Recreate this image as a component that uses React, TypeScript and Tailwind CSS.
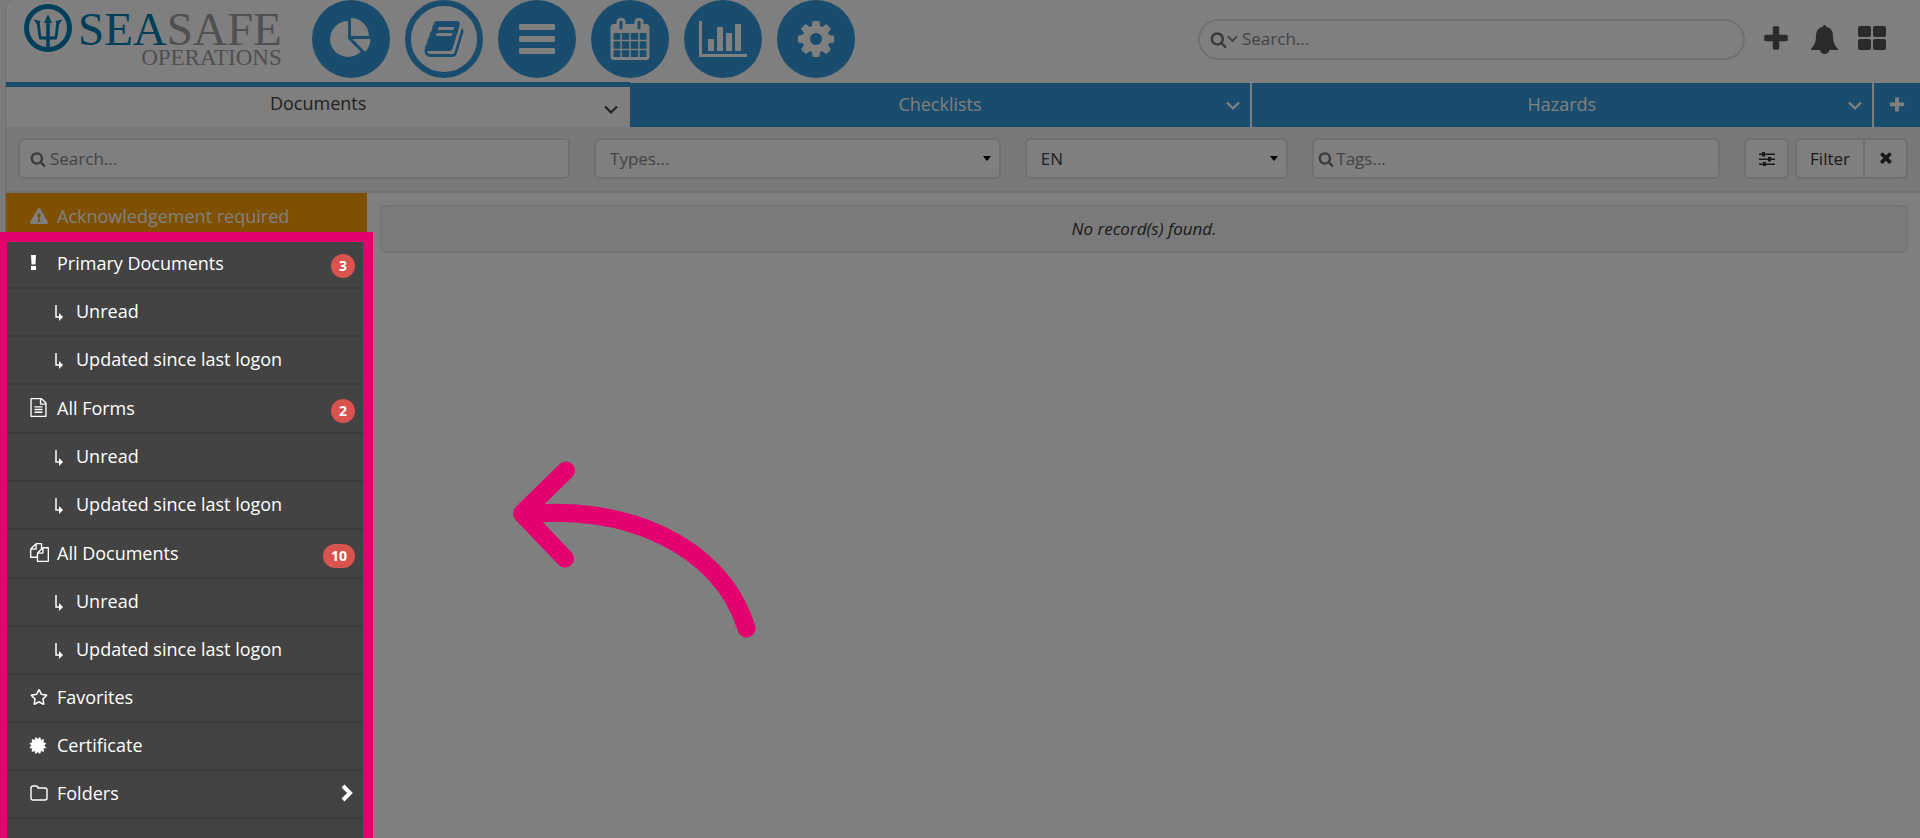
import type { ReactNode } from "react";
import { FaExclamationTriangle, FaRegStar } from "react-icons/fa";

// icons on the 1792 unit grid
const paths = {
  pie: "M768 890l546 546q-106 108-247.500 168t-298.500 60q-209 0-385.500-103t-279.500-279.500-103-385.500 103-385.500 279.500-279.500 385.500-103v762zm187 6h773q0 157-60 298.500t-168 247.500zm709-128h-768v-768q209 0 385.500 103t279.500 279.500 103 385.500z",
  book: "M1703 478q40 57 18 129l-275 906q-19 64-76.500 107.500t-122.500 43.500h-923q-77 0-148.500-53.500t-99.500-131.500q-24-67-2-127 0-4 3-27t4-37q1-8-3-21.500t-3-19.500q2-11 8-21t16.500-23.500 16.500-23.500q23-38 45-91.500t30-91.500q3-10 .5-30t-.5-28q3-11 17-28t17-23q21-36 42-92t25-90q1-9-2.500-32t.5-28q4-13 22-30.500t22-22.500q19-26 42.500-84.500t27.500-96.500q1-8-3-25.500t-2-26.500q2-8 9-18t18-23 17-21q8-12 16.500-30.500t15-35 16-36 19.500-32 26.500-23.500 36-11.500 47.500 5.500l-1 3q38-9 51-9h761q74 0 114 56t18 130l-274 906q-36 119-71.500 153.500t-128.500 34.500h-869q-27 0-38 15-11 16-1 43 24 70 144 70h923q29 0 56-15.500t35-41.500l300-987q7-22 5-57 38 15 59 43zm-1064 2q-4 13 2 22.500t20 9.500h608q13 0 25.500-9.500t16.500-22.500l21-64q4-13-2-22.500t-20-9.500h-608q-13 0-25.500 9.500t-16.500 22.500zm-83 256q-4 13 2 22.500t20 9.500h608q13 0 25.500-9.500t16.500-22.500l21-64q4-13-2-22.500t-20-9.500h-608q-13 0-25.500 9.500t-16.500 22.500z",
  bars: "M192 256h1408a64 64 0 0 1 64 64v128a64 64 0 0 1-64 64h-1408a64 64 0 0 1-64-64v-128a64 64 0 0 1 64-64zM192 768h1408a64 64 0 0 1 64 64v128a64 64 0 0 1-64 64h-1408a64 64 0 0 1-64-64v-128a64 64 0 0 1 64-64zM192 1280h1408a64 64 0 0 1 64 64v128a64 64 0 0 1-64 64h-1408a64 64 0 0 1-64-64v-128a64 64 0 0 1 64-64z",
  calendar:
    "M192 1664h288v-288h-288v288zm352 0h320v-288h-320v288zm-352-352h288v-320h-288v320zm352 0h320v-320h-320v320zm-352-384h288v-288h-288v288zm736 736h320v-288h-320v288zm-384-736h320v-288h-320v288zm768 736h288v-288h-288v288zm-384-352h320v-320h-320v320zm-352-864v-288q0-13-9.500-22.500t-22.500-9.500h-64q-13 0-22.500 9.500t-9.500 22.500v288q0 13 9.500 22.500t22.500 9.500h64q13 0 22.500-9.500t9.500-22.500zm736 864h288v-320h-288v320zm-384-384h320v-288h-320v288zm384 0h288v-288h-288v288zm32-480v-288q0-13-9.500-22.500t-22.500-9.500h-64q-13 0-22.500 9.500t-9.500 22.500v288q0 13 9.500 22.500t22.500 9.500h64q13 0 22.500-9.500t9.500-22.500zm384-64v1280q0 52-38 90t-90 38h-1408q-52 0-90-38t-38-90v-1280q0-52 38-90t90-38h128v-96q0-66 47-113t113-47h64q66 0 113 47t47 113v96h384v-96q0-66 47-113t113-47h64q66 0 113 47t47 113v96h128q52 0 90 38t38 90z",
  chart: "M640 896v512h-256v-512h256zm384-512v1024h-256v-1024h256zm1024 1152v128h-2048v-1536h128v1408h1920zm-640-896v768h-256v-768h256zm384-384v1152h-256v-1152h256z",
  cog: "M1152 896q0-106-75-181t-181-75-181 75-75 181 75 181 181 75 181-75 75-181zm512-109v222q0 12-8 23t-20 13l-185 28q-19 54-39 91 35 50 107 138 10 12 10 25t-9 23q-27 37-99 108t-94 71q-12 0-26-9l-138-108q-44 23-91 38-16 136-29 186-7 28-36 28h-222q-14 0-24.500-8.500t-11.500-21.500l-28-184q-49-16-90-37l-141 107q-10 9-25 9-14 0-25-11-126-114-165-168-7-10-7-23 0-12 8-23 15-21 51-66.500t54-70.500q-27-50-41-99l-183-27q-13-2-21-12.500t-8-23.500v-222q0-12 8-23t19-13l186-28q14-46 39-92-40-57-107-138-10-12-10-24 0-10 9-23 26-36 98.500-107.500t94.500-71.500q13 0 26 10l138 107q44-23 91-38 16-136 29-186 7-28 36-28h222q14 0 24.500 8.500t11.500 21.500l28 184q49 16 90 37l142-107q9-9 24-9 13 0 25 10 129 119 165 170 7 8 7 22 0 12-8 23-15 21-51 66.500t-54 70.500q26 50 41 98l183 28q13 2 21 12.500t8 23.500z",
  search:
    "M1216 832q0-185-131.500-316.500t-316.500-131.500-316.500 131.500-131.500 316.500 131.500 316.500 316.500 131.500 316.500-131.500 131.500-316.500zm512 832q0 52-38 90t-90 38q-54 0-90-38l-343-342q-179 124-399 124-143 0-273.500-55.500t-225-150-150-225-55.500-273.500 55.500-273.500 150-225 225-150 273.500-55.500 273.500 55.500 225 150 150 225 55.500 273.500q0 220-124 399l343 343q37 37 37 90z",
  plus: "M1600 736v192q0 40-28 68t-68 28h-416v416q0 40-28 68t-68 28h-192q-40 0-68-28t-28-68v-416h-416q-40 0-68-28t-28-68v-192q0-40 28-68t68-28h416v-416q0-40 28-68t68-28h192q40 0 68 28t28 68v416h416q40 0 68 28t28 68z",
  file: "M1596 380q28 28 48 76t20 88v1152q0 40-28 68t-68 28h-1344q-40 0-68-28t-28-68v-1600q0-40 28-68t68-28h896q40 0 88 20t76 48zm-444-244v376h376q-10-29-22-41l-313-313q-12-12-41-22zm384 1528v-1024h-416q-40 0-68-28t-28-68v-416h-768v1536h1280zm-1024-864q0-14 9-23t23-9h704q14 0 23 9t9 23v64q0 14-9 23t-23 9h-704q-14 0-23-9t-9-23v-64zm736 224q14 0 23 9t9 23v64q0 14-9 23t-23 9h-704q-14 0-23-9t-9-23v-64q0-14 9-23t23-9h704zm0 256q14 0 23 9t9 23v64q0 14-9 23t-23 9h-704q-14 0-23-9t-9-23v-64q0-14 9-23t23-9h704z",
  files:
    "M1696 384q40 0 68 28t28 68v1216q0 40-28 68t-68 28h-960q-40 0-68-28t-28-68v-288h-544q-40 0-68-28t-28-68v-672q0-40 20-88t48-76l408-408q28-28 76-48t88-20h416q40 0 68 28t28 68v328q68-40 128-40h416zm-544 213l-299 299h299v-299zm-640-384l-299 299h299v-299zm196 647l316-316v-416h-384v416q0 40-28 68t-68 28h-416v640h512v-256q0-40 20-88t48-76zm956 804v-1152h-384v416q0 40-28 68t-68 28h-416v640h896z",
  certificate:
    "M1440 896l138 135q30 28 20 70-12 41-52 51l-188 48 53 186q12 41-19 70-29 31-70 19l-186-53-48 188q-10 40-51 52-12 2-19 2-31 0-51-22l-135-138-135 138q-28 30-70 20-41-11-51-52l-48-188-186 53q-41 12-70-19-31-29-19-70l53-186-188-48q-40-10-52-51-10-42 20-70l138-135-138-135q-30-28-20-70 12-41 52-51l188-48-53-186q-12-41 19-70 29-31 70-19l186 53 48-188q10-41 51-51 41-12 70 19l135 139 135-139q29-30 70-19 41 10 51 51l48 188 186-53q41-12 70 19 31 29 19 70l-53 186 188 48q40 10 52 51 10 42-20 70z",
};

type IconName = keyof typeof paths;

function Icon({ name, className }: { name: IconName; className?: string }) {
  return (
    <svg
      viewBox={name === "chart" ? "0 -128 2048 2048" : "0 0 1792 1792"}
      fill="currentColor"
      aria-hidden="true"
      className={className}
    >
      <path d={paths[name]} />
    </svg>
  );
}

function AngleDown({ className }: { className?: string }) {
  return (
    <svg viewBox="0 0 14 10" fill="none" stroke="currentColor" strokeWidth="2.200" aria-hidden="true" className={className}>
      <path d="M1 1.500l6 6 6-6" />
    </svg>
  );
}

function Logo() {
  return (
    <a href="#" className="flex items-start font-['Liberation_Serif',serif]">
      <svg viewBox="0 0 48 48" className="mt-1 size-12 text-[#007fb5]" fill="none" stroke="currentColor" aria-hidden="true">
        <circle cx="24" cy="24" r="21.500" strokeWidth="5" />
        <path d="M24 46V17" strokeWidth="3.500" />
        <path d="M24 10.500l-4 8.500h8z" fill="currentColor" stroke="none" />
        <path d="M13.500 18c2.500 5 .5 10 3 16h15c2.500-6 .5-11 3-16" strokeWidth="2.800" />
        <path d="M9.500 15.500l7 1.500-2 5zM38.500 15.500l-7 1.500 2 5z" fill="currentColor" stroke="none" />
      </svg>
      <div className="ml-[6px] flex flex-col items-end pt-[7px]">
        <span className="text-[47px] leading-[44px] text-[#a0a0a0]">
          <span className="text-[#007fb5]">SEA</span>SAFE
        </span>
        <span className="text-[23px] leading-[14px] text-[#a0a0a0]">OPERATIONS</span>
      </div>
    </a>
  );
}

const modules: { icon: IconName; label: string; size: string }[] = [
  { icon: "pie", label: "Dashboard", size: "size-[42px]" },
  { icon: "book", label: "Library", size: "size-[42px]" },
  { icon: "bars", label: "Lists", size: "size-[42px]" },
  { icon: "calendar", label: "Calendar", size: "size-[42px]" },
  { icon: "chart", label: "Reports", size: "size-12" },
  { icon: "cog", label: "Settings", size: "size-[42px]" },
];

function Header() {
  return (
    <header className="flex h-[82px] items-start pr-[34px] pl-[18px]">
      <Logo />
      <nav className="ml-[30px] flex gap-[15px]">
        {modules.map((m) => (
          <button
            key={m.icon}
            aria-label={m.label}
            className={
              m.icon === "book"
                ? "flex size-[78px] items-center justify-center rounded-full border-6 border-[#3498db] bg-white text-[#3498db]"
                : "flex size-[78px] items-center justify-center rounded-full bg-[#3498db] text-white"
            }
          >
            <Icon name={m.icon} className={m.size} />
          </button>
        ))}
      </nav>
      <div className="ml-auto flex h-[78px] items-center">
        <label className="flex h-[41px] w-[547px] items-center rounded-full border-2 border-[#e0e0e0] px-[10px] text-[#777]">
          <Icon name="search" className="size-[17px] shrink-0" />
          <AngleDown className="h-2 w-[11px] shrink-0" />
          <input
            type="text"
            aria-label="Search everything"
            placeholder="Search..."
            className="ml-1 w-full bg-transparent outline-none placeholder:text-[#888]"
          />
        </label>
        <div className="ml-4 flex items-center gap-5 text-[#555]">
          <button aria-label="Add">
            <Icon name="plus" className="size-[30px]" />
          </button>
          <button aria-label="Notifications">
            <svg viewBox="0 0 81 87" className="h-[29px] w-[27px]" fill="currentColor" aria-hidden="true">
              <path d="M41 0c3 0 5 2 5 5 14 3 20 13 20 28 0 20 6 30 15 38v4H0v-4c9-8 15-18 15-38 0-15 7-25 21-28 0-3 2-5 5-5zM27 75h28c0 7-6 12-14 12s-14-5-14-12z" />
            </svg>
          </button>
          <button aria-label="Apps" className="pb-[2px]">
            <svg viewBox="0 0 28 24" fill="currentColor" aria-hidden="true" className="h-6 w-7">
              <rect width="13" height="11" rx="2" />
              <rect x="15" width="13" height="11" rx="2" />
              <rect y="13" width="13" height="11" rx="2" />
              <rect x="15" y="13" width="13" height="11" rx="2" />
            </svg>
          </button>
        </div>
      </div>
    </header>
  );
}

function Tabs() {
  return (
    <nav className="grid h-[45px] grid-cols-[624fr_621fr_622fr_46px] text-lg leading-8">
      <a href="#" className="relative border-t-5 border-[#3498db] text-center text-[#444]">
        Documents
        <AngleDown className="absolute right-3 bottom-3 h-[10px] w-[14px]" />
      </a>
      <a href="#" className="relative mt-px border-r-2 border-white bg-[#3498db] pt-[5px] text-center text-white">
        Checklists
        <AngleDown className="absolute right-[10px] bottom-4 h-[10px] w-[14px]" />
      </a>
      <a href="#" className="relative mt-px border-r-2 border-white bg-[#3498db] pt-[5px] text-center text-white">
        Hazards
        <AngleDown className="absolute right-[10px] bottom-4 h-[10px] w-[14px]" />
      </a>
      <button aria-label="Add tab" className="mt-px flex items-center justify-center bg-[#3498db] text-white">
        <Icon name="plus" className="size-[18px]" />
      </button>
    </nav>
  );
}

const field = "flex h-[41px] items-center rounded-md border-2 border-[#e0e0e0] bg-white";

function Select({ label, value, muted }: { label: string; value: string; muted?: boolean }) {
  return (
    <div className={`${field} relative`}>
      <select
        aria-label={label}
        className={
          muted
            ? "h-full w-full appearance-none bg-transparent px-[14px] text-[#888] outline-none"
            : "h-full w-full appearance-none bg-transparent px-[14px] text-[#444] outline-none"
        }
      >
        <option>{value}</option>
      </select>
      <svg viewBox="0 0 8 5" className="pointer-events-none absolute right-2 h-[5px] w-2 text-black" fill="currentColor">
        <path d="M0 0h8L4 5z" />
      </svg>
    </div>
  );
}

function Toolbar() {
  return (
    <form className="grid h-[66px] grid-cols-[551fr_406fr_263fr_407fr_auto] gap-6 border-b-2 border-[#e2e2e2] bg-[#f3f3f3] px-3 pt-[11px]">
      <label className={`${field} px-[10px] text-[#777]`}>
        <Icon name="search" className="size-4 shrink-0" />
        <input
          type="text"
          aria-label="Search documents"
          placeholder="Search..."
          className="ml-1 w-full bg-transparent outline-none placeholder:text-[#888]"
        />
      </label>
      <Select label="Types" value="Types..." muted />
      <Select label="Language" value="EN" />
      <label className={`${field} px-1 text-[#777]`}>
        <Icon name="search" className="size-4 shrink-0" />
        <input
          type="text"
          aria-label="Tags"
          placeholder="Tags..."
          className="ml-[2px] w-full bg-transparent outline-none placeholder:text-[#888]"
        />
      </label>
      <div className="flex gap-[6px] text-[#333]">
        <button type="button" aria-label="Filter options" className={`${field} w-[45px] justify-center`}>
          <svg viewBox="0 0 16 14" className="h-[14px] w-4" fill="currentColor" aria-hidden="true">
            <path d="M0 1.500h16v1.500H0zM0 6.500h16v1.500H0zM0 11.500h16v1.500H0zM3 0h3v4.500H3zM9 5h3v4.500H9zM4 10h3v4H4z" />
          </svg>
        </button>
        <div className={field}>
          <button type="button" className="h-full border-r-2 border-[#e0e0e0] px-[13px]">
            Filter
          </button>
          <button type="button" aria-label="Clear filter" className="flex h-full w-[41px] items-center justify-center">
            <Icon name="plus" className="size-[17px] rotate-45" />
          </button>
        </div>
      </div>
    </form>
  );
}

interface Group {
  label: string;
  icon: ReactNode;
  count: number;
}

const groups: Group[] = [
  {
    label: "Primary Documents",
    count: 3,
    icon: (
      <svg viewBox="0 0 7 15" className="h-[15px] w-[7px]" fill="currentColor" aria-hidden="true">
        <path d="M1 0h5l-.5 9.500h-4zM1 11h5v4H1z" />
      </svg>
    ),
  },
  { label: "All Forms", count: 2, icon: <Icon name="file" className="-ml-px size-[19px]" /> },
  { label: "All Documents", count: 10, icon: <Icon name="files" className="size-[19px]" /> },
];

function SubItem({ label }: { label: string }) {
  return (
    <li className="border-b-2 border-[#3b3b3b]">
      <a href="#" className="flex h-[46px] items-center pb-[2px] pl-12">
        <svg viewBox="0 0 10 16" className="mt-1 h-4 w-[10px]" fill="none" stroke="currentColor" aria-hidden="true">
          <path d="M2 0v12h4" strokeWidth="1.500" />
          <path d="M5 8l4 4-4 4z" fill="currentColor" stroke="none" />
        </svg>
        <span className="ml-3">{label}</span>
      </a>
    </li>
  );
}

function PlainItem({ label, icon, arrow }: { label: string; icon: ReactNode; arrow?: boolean }) {
  return (
    <li className="border-b-2 border-[#3b3b3b]">
      <a href="#" className="flex h-[46px] items-center pr-[14px] pb-[2px] pl-6">
        <span className="w-[27px]">{icon}</span>
        {label}
        {arrow && (
          <svg viewBox="0 0 12 18" className="ml-auto h-[18px] w-3" fill="none" stroke="currentColor" strokeWidth="4" aria-hidden="true">
            <path d="M2 2l7 7-7 7" />
          </svg>
        )}
      </a>
    </li>
  );
}

function Sidebar() {
  return (
    <aside className="w-[361px] shrink-0 bg-[#434343] text-lg leading-6 text-white">
      <a href="#" className="flex h-[47px] items-center bg-[#ffa000] pb-[2px] pl-6">
        <span className="w-[27px]">
          <FaExclamationTriangle className="size-[18px]" />
        </span>
        Acknowledgement required
      </a>
      <ul>
        {groups.map((g) => (
          <li key={g.label}>
            <a href="#" className="flex h-[49px] items-center border-b-2 border-[#3b3b3b] pr-3 pb-[2px] pl-6">
              <span className="w-[27px]">{g.icon}</span>
              {g.label}
              <span className="mt-[6px] ml-auto rounded-full bg-[#d9534f] px-2 text-sm leading-6 font-bold">
                {g.count}
              </span>
            </a>
            <ul>
              <SubItem label="Unread" />
              <SubItem label="Updated since last logon" />
            </ul>
          </li>
        ))}
        <PlainItem label="Favorites" icon={<FaRegStar className="size-[18px]" />} />
        <PlainItem label="Certificate" icon={<Icon name="certificate" className="-ml-px size-[19px]" />} />
        <PlainItem
          label="Folders"
          arrow
          icon={
            <svg viewBox="0 0 18 16" className="h-4 w-[18px]" fill="none" stroke="currentColor" strokeWidth="1.400" aria-hidden="true">
              <path d="M1 3a2 2 0 0 1 2-2h3a2 2 0 0 1 2 2h7a2 2 0 0 1 2 2v8a2 2 0 0 1-2 2H3a2 2 0 0 1-2-2z" />
            </svg>
          }
        />
      </ul>
    </aside>
  );
}

export default function App() {
  return (
    <div className="relative flex h-screen flex-col overflow-hidden bg-[#f4f4f4] pl-[5px] font-['Open_Sans',sans-serif] text-[17px]">
      <div className="flex flex-1 flex-col rounded-l-lg border-l border-[#ddd] bg-white">
        <Header />
        <Tabs />
        <Toolbar />
        <div className="flex flex-1">
          <Sidebar />
          <main className="flex-1 p-3 pl-[13px]">
            <p className="rounded-md border-2 border-[#e8e8e8] bg-[#f5f5f5] py-[10px] text-center leading-6 text-[#333] italic">
              No record(s) found.
            </p>
          </main>
        </div>
      </div>

      {/* spotlight: everything outside the frame is dimmed by its shadow */}
      <div className="pointer-events-none absolute top-[232px] -bottom-4 -left-[3px] w-[376px] border-10 border-[#e5006f] shadow-[0_0_0_2000px_rgba(0,0,0,0.5)]" />
      <svg
        viewBox="0 0 250 180"
        className="pointer-events-none absolute top-[460px] left-[510px] h-[180px] w-[250px]"
        fill="none"
        stroke="#e5006f"
        strokeWidth="18"
        strokeLinecap="round"
        strokeLinejoin="round"
        aria-hidden="true"
      >
        <path d="M56 10.500L12 53.500 55 98.500" />
        <path d="M15 54.500C110 44 210 82 236.500 168.500" />
      </svg>
    </div>
  );
}
